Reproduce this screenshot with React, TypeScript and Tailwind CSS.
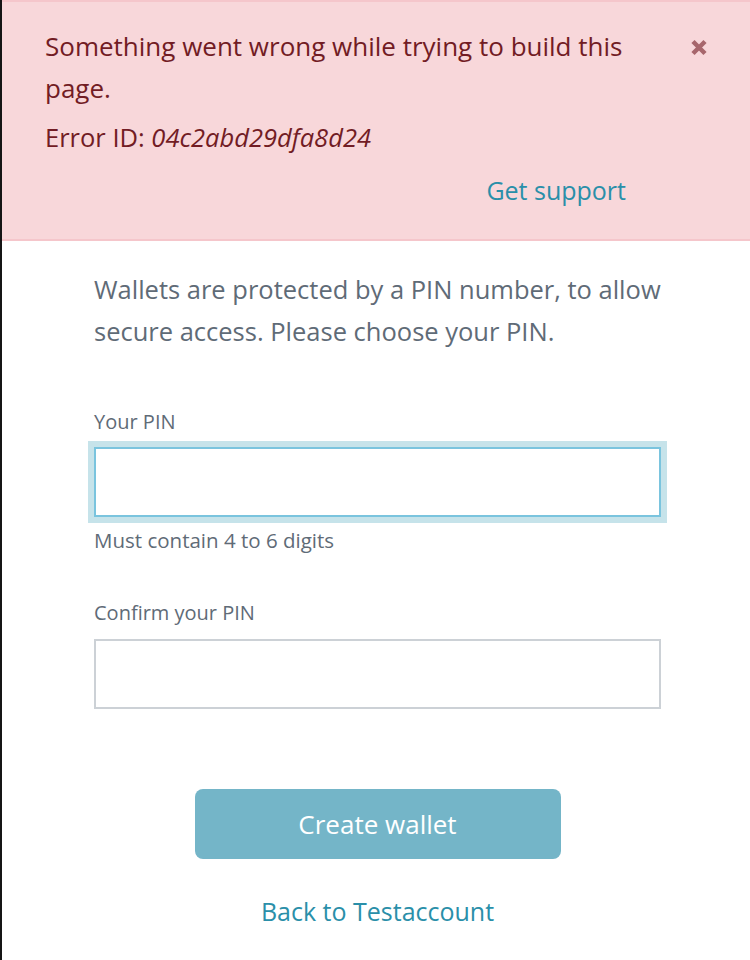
import React from "react";

export default function App() {
  return (
    <div
      className="min-h-[960px] w-[750px] border-l-2 border-[#151515] bg-white"
      style={{ fontFamily: "'Open Sans', 'Noto Sans', sans-serif" }}
    >
      {/* Error alert */}
      <div className="relative border-y-2 border-[#f5c6cb] bg-[#f8d7da] pb-[28px] pl-[43px] pr-[118px] pt-[23px] text-[#721c24]">
        <p className="text-[26px] leading-[42px]">
          Something went wrong while trying to build this page.
        </p>
        <p className="mt-[7px] text-[25.5px] leading-[42px]">
          Error ID: <em>04c2abd29dfa8d24</em>
        </p>
        <div className="mt-[11px] pr-[6px] text-right text-[25px] leading-[42px]">
          <a className="text-[#2a8fa9]">Get support</a>
        </div>
        <button
          className="absolute right-[42px] top-[37px] text-[#721c24] opacity-60"
          aria-label="Close"
        >
          <svg width="18" height="17" viewBox="0 0 18 17">
            <path
              d="M3 2.5 L15 14.5 M15 2.5 L3 14.5"
              stroke="currentColor"
              strokeWidth="4.5"
              strokeLinecap="butt"
            />
          </svg>
        </button>
      </div>

      {/* Form */}
      <div className="pl-[92px] pr-[89px] pt-[27px]">
        <p className="text-[25.5px] leading-[42px] text-[#5f6b77]">
          Wallets are protected by a PIN number, to allow secure access. Please
          choose your PIN.
        </p>

        <label className="mt-[56px] block text-[20px] leading-[28px] text-[#5f6b77]">
          Your PIN
        </label>
        <div className="-mx-[6px] mt-[5px] bg-[#c6e3ea] p-[6px]">
          <input
            type="password"
            className="block h-[70px] w-full border-2 border-[#7ac4de] bg-white px-3 outline-none"
          />
        </div>
        <div className="mt-[3px] text-[20.5px] leading-[28px] text-[#5f6b77]">
          Must contain 4 to 6 digits
        </div>

        <label className="mt-[45px] block text-[20px] leading-[28px] text-[#5f6b77]">
          Confirm your PIN
        </label>
        <input
          type="password"
          className="mt-[12px] block h-[70px] w-full border-2 border-[#ccd1d6] bg-white px-3 outline-none"
        />

        <div className="mt-[80px] flex justify-center">
          <button className="h-[70px] w-[366px] rounded-[8px] bg-[#74b5c8] text-[26px] text-white">
            Create wallet
          </button>
        </div>
        <div className="mt-[34px] text-center">
          <a className="text-[25px] leading-[36px] text-[#2a8fa9]">
            Back to Testaccount
          </a>
        </div>
      </div>
    </div>
  );
}
